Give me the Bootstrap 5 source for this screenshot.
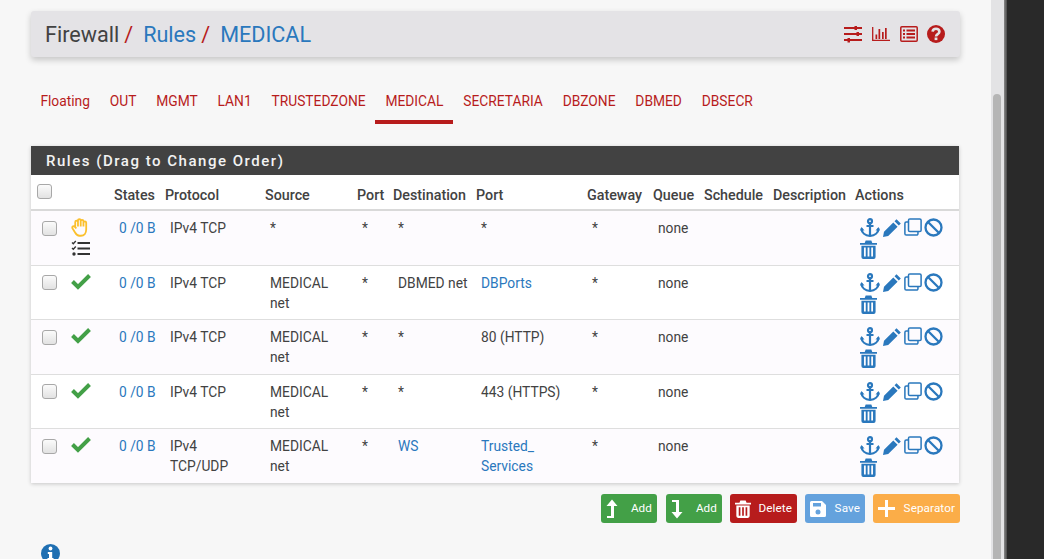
<!DOCTYPE html>
<html lang="en">
<head>
    <meta charset="UTF-8">
    <meta name="viewport" content="width=device-width, initial-scale=1.0">
    <title>Firewall: Rules: MEDICAL</title>
    <link href="https://cdn.jsdelivr.net/npm/bootstrap@5.3.0/dist/css/bootstrap.min.css" rel="stylesheet">
    <style>
        html, body { height: 100%; overflow: hidden; }
        body { background: #f7f7f7; color: #424242; font-family: Roboto, "Liberation Sans", sans-serif; font-size: 13.8px; }
        a { text-decoration: none; color: #2a78bd; }

        .page-wrap { height: 559px; }
        .page-main { width: 991px; padding: 11px 31px 0; flex: none; overflow: hidden; }
        .page-track { width: 13px; flex: none; background: #e3e3e5; padding: 94px 3px 0 2px; }
        .page-thumb { height: 465px; background: #b5b5b5; border-radius: 4px 4px 0 0; }
        .page-edge { width: 3px; flex: none; background: linear-gradient(90deg, #8a8a8a, #4a4a4a); }
        .page-dark { flex: 1; background: #292929; }

        /* header bar */
        .crumb-bar { width: 929px; height: 46px; background: #e4e3e6; border-radius: 3px; padding: 2px 15px 0 14px; box-shadow: 0 3px 6px rgba(0,0,0,.2); }
        .crumb-bar h1 { font-size: 21.6px; font-weight: 400; margin: 0; color: #424242; }
        .crumb-sep { color: #b71c1c; margin: 0 10px 0 5px; }
        .crumb-tools { gap: 10px; color: #b71c1c; margin-top: -2px; }
        .crumb-tools svg { display: block; }
        .crumb-tools .tool-help { margin-left: -1px; }

        /* tabs */
        .rule-tabs { height: 46px; margin: 21px 0 0 -.5px; }
        .rule-tabs .nav-link { color: #b71c1c; padding: 13px 9.9px 0; font-size: 13.8px; height: 46px; }
        .rule-tabs .nav-link.active { border-bottom: 4px solid #b71c1c; }

        /* rules panel */
        .rule-panel { margin-top: 22px; width: 928px; background: #fff; box-shadow: 0 1px 4px rgba(0,0,0,.2); }
        .rule-head { background: #424242; color: #f2f2f2; height: 29px; line-height: 30px; padding-left: 15px; font-size: 15px; font-weight: 500; letter-spacing: 1.52px; }
        .rule-table { table-layout: fixed; width: 928px; margin: 0; --bs-table-bg: transparent; color: #424242; font-size: 13.8px; }
        .rule-table th { font-size: 14.3px; font-weight: 500; padding: 10px 0 5px 5px; height: 35px; line-height: 18px; border-bottom: 2px solid #d9d9d9; color: #424242; white-space: nowrap; overflow: visible; }
        .rule-table td { padding: 7px 0 6.5px 10px; line-height: 20px; height: 54.5px; border-bottom: 1px solid #dedede; vertical-align: top; }
        .rule-table tr:last-child td { border-bottom: 0; }
        .rule-table tbody tr.row-tint { background: #fdfbfe; }
        .w-a { width: 30px; } .w-b { width: 48px; } .w-c { width: 51px; } .w-d { width: 100px; }
        .w-e { width: 92px; } .w-f { width: 36px; } .w-g { width: 83px; } .w-h { width: 111px; }
        .w-i { width: 66px; } .w-j { width: 51px; } .w-k { width: 69px; } .w-l { width: 82px; } .w-m { width: 109px; }
        .rule-table .cell-box { padding-left: 11px; }
        .rule-table th.cell-box { padding: 9px 0 0 6px; vertical-align: top; }
        .tick-box { appearance: none; display: block; width: 15px; height: 15px; margin: 2.5px 0 0; border: 1px solid #a8a8a8; border-radius: 3px; background: linear-gradient(#fbfbfb, #e2e2e2); }
        .act-icons { display: flex; flex-wrap: wrap; align-content: flex-start; gap: 2px; width: 90px; height: 40px; color: #2a78bd; }
        .act-icons svg { display: block; }
        .state-icons { line-height: 0; }
        .state-icons svg { display: block; }
        .state-icons .check-mark { margin-top: -1px; }
        .state-icons .hand-mark { margin: 0 0 3px; }

        /* buttons */
        .btn-row { width: 929px; margin-top: 11px; gap: 8px; }
        .act-btn { height: 29px; padding: 0 5px; font-size: 11.7px; letter-spacing: .1px; color: #fff; border: 0; border-radius: 3px; display: flex; align-items: center; justify-content: space-between; }
        .act-btn:hover { color: #fff; }
        .btn-add { width: 56px; background: #43a047; }
        .btn-first { margin-right: 1px; }
        .btn-del { width: 67px; background: #b71c1c; }
        .btn-save { width: 60px; background: #64a2dd; }
        .btn-sep { width: 87px; background: #fbad48; }
        .info-icon { margin: 21px 0 0 10px; display: block; color: #1f6fb2; }
    </style>
</head>
<body>
    <svg width="0" height="0" class="position-absolute">
        <symbol id="i-anchor" viewBox="0 0 20 20"><g fill="none" stroke="currentColor" stroke-width="2.2"><circle cx="10" cy="3.2" r="2"/><path d="M10 5.5V18M6.5 8h7"/><path d="M1.5 10.5c0 4.5 4 7 8.5 7.5 4.5-.5 8.5-3 8.5-7.5"/></g><path fill="currentColor" d="M0 12.5l1.5-3.500 3 3.500zM20 12.5L18.500 9l-3 3.500z"/></symbol>
        <symbol id="i-pencil" viewBox="0 0 20 20"><path fill="currentColor" d="M14.500 1.200l4.300 4.300-2 2-4.300-4.300zM11.300 4.400l4.300 4.300L6.200 18 1 19l1-5.200z"/></symbol>
        <symbol id="i-copy" viewBox="0 0 20 20"><g fill="none" stroke="currentColor" stroke-width="1.700"><rect x="5" y="1" width="14" height="14" rx="1.500"/><path d="M5 4.500H2.500A1.500 1.500 0 0 0 1 6V17.500A1.500 1.500 0 0 0 2.500 19H14a1.500 1.500 0 0 0 1.500-1.500V15"/></g></symbol>
        <symbol id="i-ban" viewBox="0 0 19 19"><g fill="none" stroke="currentColor" stroke-width="2.300"><circle cx="9.500" cy="9.500" r="8"/><path d="M4 4l11 11"/></g></symbol>
        <symbol id="i-trash" viewBox="0 0 18 20"><path fill="currentColor" fill-rule="evenodd" d="M0 3h5l1-2.500h6L13 3h5v2H0zM1.500 6h15v12a2 2 0 0 1-2 2h-11a2 2 0 0 1-2-2zM4.200 8v9.500h1.900V8zM8.050 8v9.500h1.900V8zM11.900 8v9.500h1.900V8z"/></symbol>
        <symbol id="i-check" viewBox="0 0 20 20"><path fill="none" stroke="currentColor" stroke-width="4" d="M1.500 9.500l5.500 5.500L18.500 3.500"/></symbol>
    </svg>

    <div class="page-wrap d-flex">
        <div class="page-main">
            <div class="crumb-bar d-flex align-items-center justify-content-between">
                <h1>Firewall<span class="crumb-sep">/</span><a href="#">Rules</a><span class="crumb-sep">/</span><a href="#">MEDICAL</a></h1>
                <div class="crumb-tools d-flex align-items-center">
                    <svg width="18" height="18" viewBox="0 0 18 18"><g stroke="currentColor" stroke-width="2" fill="none"><path d="M0 3h18M0 9h18M0 15h18"/></g><g fill="currentColor"><rect x="10.500" y="1" width="2.500" height="4"/><rect x="12.500" y="7" width="2.500" height="4"/><rect x="3.500" y="13" width="2.500" height="4.500"/></g></svg>
                    <svg width="18" height="18" viewBox="0 0 18 18"><path fill="none" stroke="currentColor" stroke-width="1.300" d="M.7 2v13.300H18"/><g fill="currentColor"><rect x="3.500" y="9.500" width="1.700" height="4.500"/><rect x="6.500" y="4" width="1.700" height="10"/><rect x="10" y="7" width="1.700" height="7"/><rect x="13" y="3" width="1.700" height="11"/></g></svg>
                    <svg width="18" height="18" viewBox="0 0 18 18"><rect x=".8" y="1.800" width="16.400" height="14.400" rx="1" fill="none" stroke="currentColor" stroke-width="1.500"/><g fill="currentColor"><rect x="3" y="4.500" width="2" height="2"/><rect x="3" y="8" width="2" height="2"/><rect x="3" y="11.500" width="2" height="2"/><rect x="6.500" y="4.500" width="8.500" height="2"/><rect x="6.500" y="8" width="8.500" height="2"/><rect x="6.500" y="11.500" width="8.500" height="2"/></g></svg>
                    <svg class="tool-help" width="18" height="18" viewBox="0 0 18 18"><circle cx="9" cy="9" r="9" fill="currentColor"/><path fill="none" stroke="#e4e3e6" stroke-width="2.600" d="M5.600 6.600C5.800 4.800 7.200 3.800 9 3.800c2 0 3.400 1.200 3.400 2.900 0 2.500-3.400 2.400-3.400 4.800"/><rect x="7.600" y="12.500" width="2.800" height="2.600" fill="#e4e3e6"/></svg>
                </div>
            </div>

            <ul class="nav rule-tabs">
                <li class="nav-item"><a class="nav-link" href="#">Floating</a></li>
                <li class="nav-item"><a class="nav-link" href="#">OUT</a></li>
                <li class="nav-item"><a class="nav-link" href="#">MGMT</a></li>
                <li class="nav-item"><a class="nav-link" href="#">LAN1</a></li>
                <li class="nav-item"><a class="nav-link" href="#">TRUSTEDZONE</a></li>
                <li class="nav-item"><a class="nav-link active" href="#">MEDICAL</a></li>
                <li class="nav-item"><a class="nav-link" href="#">SECRETARIA</a></li>
                <li class="nav-item"><a class="nav-link" href="#">DBZONE</a></li>
                <li class="nav-item"><a class="nav-link" href="#">DBMED</a></li>
                <li class="nav-item"><a class="nav-link" href="#">DBSECR</a></li>
            </ul>

            <div class="rule-panel">
                <div class="rule-head">Rules (Drag to Change Order)</div>
                <table class="table rule-table">
                    <colgroup>
                        <col class="w-a"><col class="w-b"><col class="w-c"><col class="w-d"><col class="w-e"><col class="w-f"><col class="w-g"><col class="w-h"><col class="w-i"><col class="w-j"><col class="w-k"><col class="w-l"><col class="w-m">
                    </colgroup>
                    <thead>
                        <tr>
                            <th class="cell-box"><input type="checkbox" class="tick-box m-0"></th>
                            <th></th><th>States</th><th>Protocol</th><th>Source</th><th>Port</th><th>Destination</th><th>Port</th><th>Gateway</th><th>Queue</th><th>Schedule</th><th>Description</th><th>Actions</th>
                        </tr>
                    </thead>
                    <tbody id="ruleRows"></tbody>
                </table>
            </div>

            <div class="btn-row d-flex justify-content-end">
                <a href="#" class="act-btn btn-add btn-first">
                    <svg width="12" height="20" viewBox="0 0 12 20"><path fill="#fff" d="M6 .5l5.500 6.500H8V19H1v-2h4V7H.5z"/></svg>Add</a>
                <a href="#" class="act-btn btn-add">
                    <svg width="12" height="20" viewBox="0 0 12 20"><path fill="#fff" d="M6 19.500L11.500 13H8V1H1v2h4v10H.5z"/></svg>Add</a>
                <a href="#" class="act-btn btn-del">
                    <svg width="16" height="18"><use href="#i-trash" color="#fff"/></svg>Delete</a>
                <a href="#" class="act-btn btn-save">
                    <svg width="16" height="16" viewBox="0 0 16 16"><path fill="#fff" fill-rule="evenodd" d="M1.500 0H12l4 4v10.500a1.500 1.500 0 0 1-1.500 1.500h-13A1.500 1.500 0 0 1 0 14.500v-13A1.500 1.500 0 0 1 1.500 0zM3 2v3.500h8V2zM8 8.500a2.500 2.500 0 1 0 0 5 2.500 2.500 0 0 0 0-5z"/></svg>Save</a>
                <a href="#" class="act-btn btn-sep">
                    <svg width="17" height="17" viewBox="0 0 17 17"><path fill="#fff" d="M7 0h3v7h7v3h-7v7H7v-7H0V7h7z"/></svg>Separator</a>
            </div>

            <svg class="info-icon" width="19" height="19" viewBox="0 0 19 19"><circle cx="9.500" cy="9.500" r="9.500" fill="currentColor"/><circle cx="9.500" cy="4.500" r="1.900" fill="#fff"/><path fill="#fff" d="M6.800 8h4.400v6h1.300v2H6.500v-2h1.500v-4H6.800z"/></svg>
        </div>
        <div class="page-track"><div class="page-thumb"></div></div>
        <div class="page-edge"></div>
        <div class="page-dark"></div>
    </div>

    <script>
        const rules = [
            { hand: true, proto: "IPv4 TCP", src: "*", dest: "*", port: "*" },
            { proto: "IPv4 TCP", src: "MEDICAL<br>net", dest: "DBMED net", port: '<a href="#">DBPorts</a>' },
            { proto: "IPv4 TCP", src: "MEDICAL<br>net", dest: "*", port: "80 (HTTP)" },
            { proto: "IPv4 TCP", src: "MEDICAL<br>net", dest: "*", port: "443 (HTTPS)" },
            { proto: "IPv4 TCP/UDP", src: "MEDICAL<br>net", dest: '<a href="#">WS</a>', port: '<a href="#">Trusted_<br>Services</a>' }
        ];

        const stateCheck = '<svg width="20" height="20" viewBox="0 0 20 20" class="check-mark"><use href="#i-check" color="#43a047"/></svg>';
        const stateHand = `
            <svg class="hand-mark" width="19" height="19" viewBox="0 0 18 18"><path fill="none" stroke="#fbc02d" stroke-width="1.700" stroke-linejoin="round" d="M4 9.500V3.800a1.300 1.300 0 0 1 2.600 0V8M6.600 8V2.300a1.300 1.300 0 0 1 2.600 0V8M9.200 8V3a1.300 1.300 0 0 1 2.600 0v5M11.800 8V4.500a1.300 1.300 0 0 1 2.600 0V11c0 3.500-2 5.800-5 5.800H8c-2 0-3-1-4-2.800L1.500 10c-1-1.800 1.300-3.200 2.500-1.500L5 10"/></svg>
            <svg width="20" height="18" viewBox="0 0 20 18"><g fill="#333"><rect x="6.500" y="2" width="12.500" height="2"/><rect x="6.500" y="7.500" width="12.500" height="2"/><rect x="6.500" y="13" width="12.500" height="2"/><circle cx="3" cy="14" r="1.700"/></g><path fill="none" stroke="#333" stroke-width="1.300" d="M1 2.500l1.300 1.300L4.800 1M1 8l1.300 1.300L4.800 6.500"/></svg>`;
        const actions = [["i-anchor", 20, 20], ["i-pencil", 20, 20], ["i-copy", 18, 18], ["i-ban", 19, 19], ["i-trash", 17, 19]]
            .map(([id, w, h]) => `<svg width="${w}" height="${h}"><use href="#${id}"/></svg>`).join("");

        const body = document.getElementById("ruleRows");
        rules.forEach((r, i) => {
            const row = document.createElement("tr");
            if (i % 2 === 0) row.className = "row-tint";
            row.innerHTML = `
                <td class="cell-box"><input type="checkbox" class="tick-box"></td>
                <td class="state-icons">${r.hand ? stateHand : stateCheck}</td>
                <td class="text-nowrap"><a href="#">0 /0 B</a></td>
                <td class="pe-2">${r.proto}</td>
                <td>${r.src}</td>
                <td>*</td>
                <td>${r.dest}</td>
                <td>${r.port}</td>
                <td>*</td>
                <td>none</td>
                <td></td>
                <td></td>
                <td><div class="act-icons">${actions}</div></td>`;
            body.appendChild(row);
        });
    </script>
    <script src="https://cdn.jsdelivr.net/npm/bootstrap@5.3.0/dist/js/bootstrap.bundle.min.js"></script>
</body>
</html>
